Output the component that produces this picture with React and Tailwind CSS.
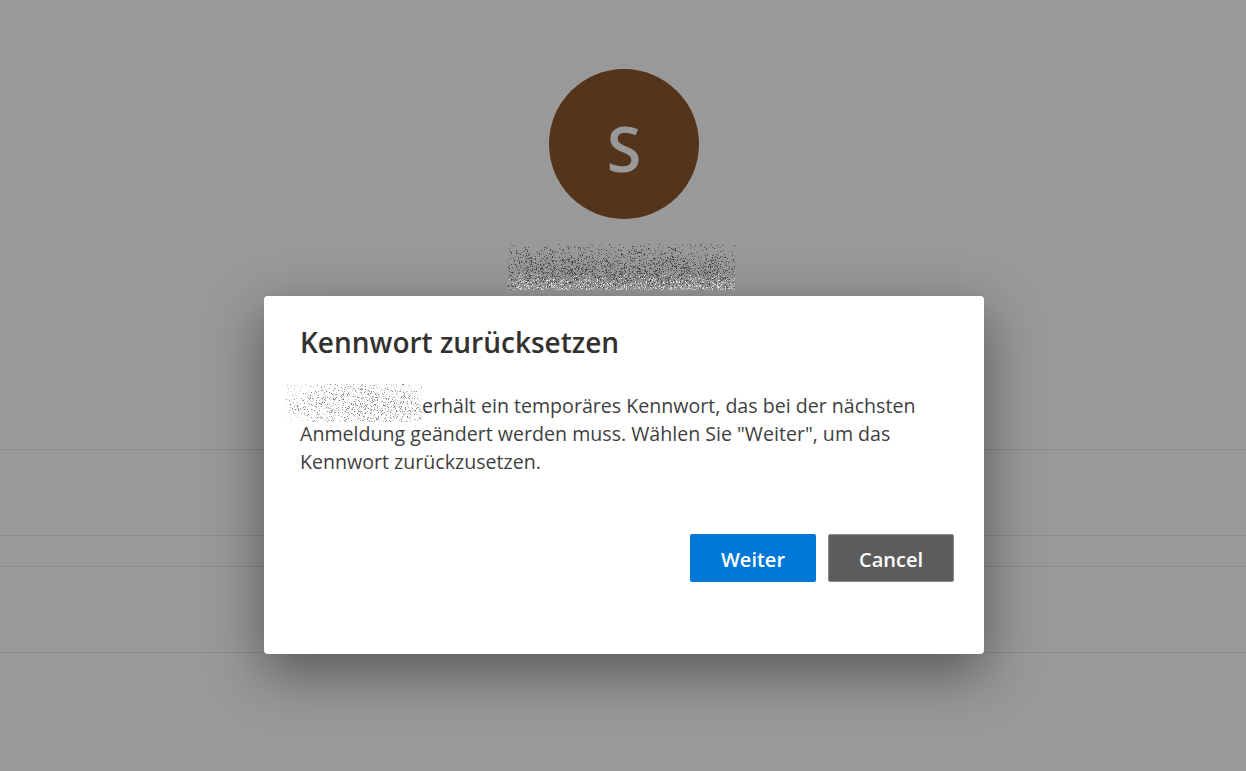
import React from 'react';

// seeded noise for the blurred-out bits of the screenshot
const makeNoise = (w, h, seed, count, colorAt) => {
  let s = seed;
  const rnd = () => {
    s = (s * 16807) % 2147483647;
    return s / 2147483647;
  };
  const dots = [];
  for (let i = 0; i < count; i++) {
    const x = Math.floor(rnd() * w);
    const y = Math.floor(rnd() * h);
    const fill = colorAt(x, y, rnd);
    if (fill) dots.push({ x, y, fill });
  }
  return dots;
};

const Noise = ({ w, h, dots }) => (
  <svg width={w} height={h} viewBox={`0 0 ${w} ${h}`} shapeRendering="crispEdges" className="block">
    {dots.map((d, i) => (
      <rect key={i} x={d.x} y={d.y} width="1" height="1" fill={d.fill} />
    ))}
  </svg>
);

const nameDots = makeNoise(227, 46, 4711, 5200, (x, y, rnd) => {
  const r = rnd();
  // pale speckle fades in towards the bottom edge
  if (rnd() < (y - 28) / 16) {
    return r < 0.55 ? '#e8e8e8' : r < 0.7 ? '#5c5c5c' : r < 0.85 ? '#c4c4c4' : null;
  }
  // thins out towards the top edge and the sides
  const edge = Math.min(x, 226 - x) < 14 ? 0.6 : 1;
  if (rnd() > (0.12 + y / 38) * edge) return null;
  const cols = ['#3d3d3d', '#555555', '#6b6258', '#56636e', '#444444', '#75695c', '#707070', '#7f7f7f'];
  return cols[Math.floor(r * cols.length)];
});

const mailDots = makeNoise(136, 38, 2903, 2400, (x, y, rnd) => {
  const r = rnd();
  const dist = Math.abs(x - 85) / 68 + Math.abs(y - 22) / 22;
  if (rnd() < dist * 0.55) return r < 0.25 ? '#dddddd' : null;
  if (r < 0.3) return '#8a8a8a';
  if (r < 0.6) return '#b8b8b8';
  return '#e2e2e2';
});

export default function App() {
  return (
    <div className="relative h-[771px] w-full overflow-hidden bg-[#999999] font-['Open_Sans','Noto_Sans',sans-serif]">
      {/* page behind the overlay */}
      <div className="flex flex-col items-center pt-[69px]">
        <div className="ml-[2px] flex h-[150px] w-[150px] items-center justify-center rounded-full bg-[#54341a] pt-[7px] text-[63px] font-semibold leading-none text-[#999999]">
          S
        </div>
        <div className="mr-[4px] mt-[25px]">
          <Noise w={227} h={46} dots={nameDots} />
        </div>
      </div>
      <div className="mt-[159px] h-[86px] border-t border-[#8a8a8a]" />
      <div className="h-[31px] border-t border-[#8a8a8a]" />
      <div className="h-[86px] border-t border-[#8a8a8a]" />
      <div className="border-t border-[#8a8a8a]" />

      {/* dialog */}
      <div className="absolute left-[264px] top-[296px] flex h-[358px] w-[720px] flex-col rounded-[4px] bg-white pl-[36px] pr-[30px] pt-[27px] shadow-[0_18px_55px_rgba(0,0,0,0.44)]">
        <h1 className="text-[28px] font-semibold leading-[38px] text-[#323130]">Kennwort zurücksetzen</h1>
        <p className="relative mt-[31px] text-[19.6px] leading-[28px] text-[#3f3f3f]">
          <span className="absolute left-[-14px] top-[-8px]">
            <Noise w={136} h={38} dots={mailDots} />
          </span>
          <span className="ml-[122px]">erhält ein temporäres Kennwort, das bei der nächsten</span>
          <br />
          Anmeldung geändert werden muss. Wählen Sie "Weiter", um das
          <br />
          Kennwort zurückzusetzen.
        </p>
        <div className="mt-[58px] flex justify-end gap-3">
          <button className="h-12 w-[126px] rounded-[2px] bg-[#0078d7] pt-[3px] text-[20px] font-semibold text-white">
            Weiter
          </button>
          <button className="h-12 w-[126px] rounded-[2px] border border-[#8a8a8a] bg-[#5c5c5c] pt-[3px] text-[20px] font-semibold text-white">
            Cancel
          </button>
        </div>
      </div>
    </div>
  );
}
